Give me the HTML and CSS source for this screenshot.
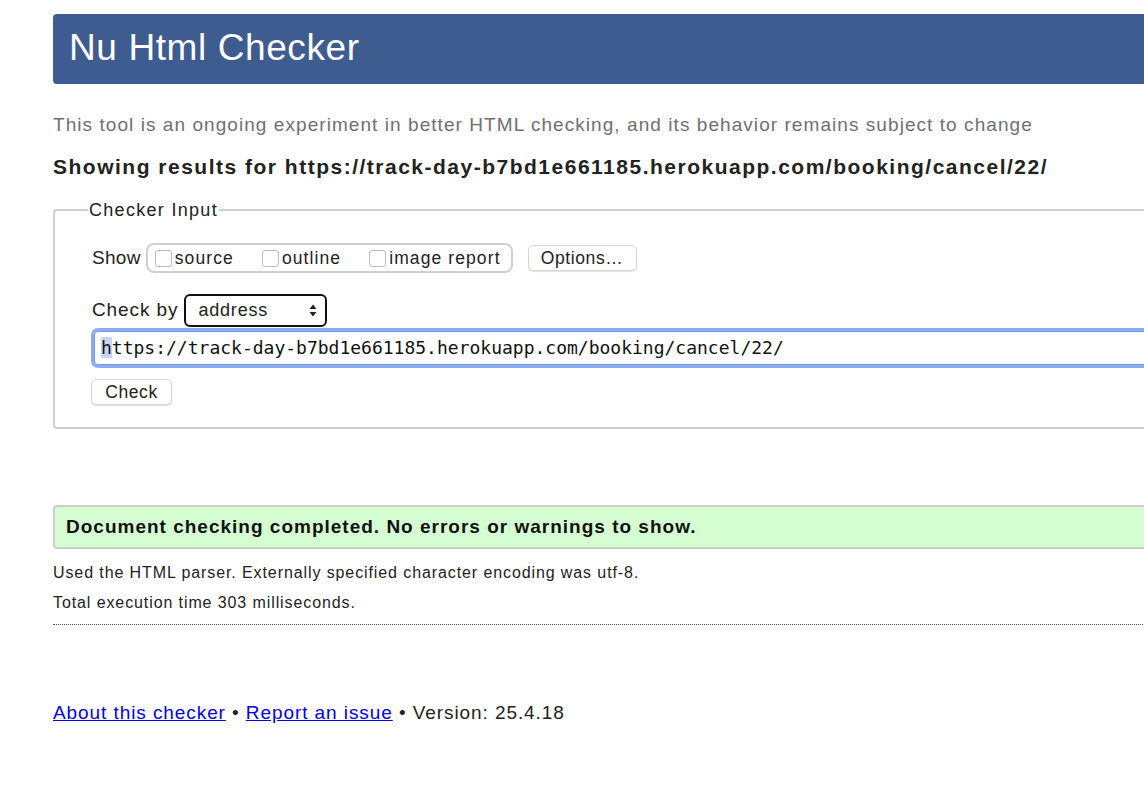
FILE: index.html
```html
<!DOCTYPE html>
<html lang="en">
<head>
<meta charset="utf-8">
<title>Nu Html Checker</title>
<link rel="stylesheet" href="styles.css">
</head>
<body>
<div class="page">
  <h1 class="banner">Nu Html Checker</h1>
  <p class="intro">This tool is an ongoing experiment in better HTML checking, and its behavior remains subject to change</p>
  <p class="showing">Showing results for https://track-day-b7bd1e661185.herokuapp.com/booking/cancel/22/</p>
  <fieldset class="input">
    <legend>Checker Input</legend>
    <div class="row show-row">
      <span class="label show-label">Show</span>
      <span class="group">
        <label class="opt"><span class="cb"></span>source</label>
        <label class="opt"><span class="cb"></span>outline</label>
        <label class="opt"><span class="cb"></span>image report</label>
      </span>
      <span class="btn options">Options…</span>
    </div>
    <div class="row by-row">
      <span class="label">Check by</span>
      <span class="select">address<svg class="arrows" width="8" height="13" viewBox="0 0 8 13"><path d="M4 0.5 L7.5 5 H0.5 Z M4 12.5 L7.5 8 H0.5 Z" fill="#222"/></svg></span>
    </div>
    <div class="url"><span class="caret">h</span>ttps://track-day-b7bd1e661185.herokuapp.com/booking/cancel/22/</div>
    <span class="btn check">Check</span>
  </fieldset>
  <div class="success">Document checking completed. No errors or warnings to show.</div>
  <p class="details">Used the HTML parser. Externally specified character encoding was utf-8.</p>
  <p class="details time">Total execution time 303 milliseconds.</p>
  <div class="dots"></div>
  <p class="footer"><a href="#">About this checker</a> • <a href="#">Report an issue</a> • Version: 25.4.18</p>
</div>
</body>
</html>
```
FILE: styles.css
```css
html { overflow: hidden; background: #fff; }
body { margin: 0; font-family: "Liberation Sans", Arial, sans-serif; color: #222; }
.page { width: 1200px; padding: 14px 0 0 53px; }
.banner {
  margin: 0;
  height: 70px;
  box-sizing: border-box;
  padding: 14px 0 0 16px;
  background: #3e5c8f;
  color: #fff;
  font-weight: normal;
  font-size: 37px;
  letter-spacing: 0.6px;
  line-height: 40px;
  border-radius: 4px 0 0 4px;
}
.intro { margin: 30px 0 0; font-size: 19px; letter-spacing: 1.06px; line-height: 22px; color: #707070; }
.showing { margin: 19px 0 0; font-size: 21px; letter-spacing: 1.5px; line-height: 24px; font-weight: bold; color: #222; }
.input {
  margin: 21px 0 0;
  padding: 23px 0 22px 37px;
  border: 2px solid #cfcfcf;
  border-right: none;
  border-radius: 4px 0 0 4px;
  min-width: 0;
}
.input legend { margin-left: -4px; padding: 0 1px; font-size: 18px; letter-spacing: 1.3px; line-height: 20px; color: #222; }
.row { display: flex; align-items: center; }
.label { font-size: 19px; letter-spacing: 0.9px; color: #222; }
.show-label { letter-spacing: 0.3px; }
.show-row { height: 30px; }
.group {
  display: flex; align-items: center;
  margin-left: 5px;
  height: 30px; box-sizing: border-box;
  padding: 0 10px 0 7px;
  border: 2px solid #d0d0d0; border-radius: 8px;
  gap: 28px;
  font-size: 17.5px; letter-spacing: 1.1px;
}
.opt { display: flex; align-items: center; gap: 3px; color: #222; }
.cb { width: 17px; height: 17px; box-sizing: border-box; border: 1px solid #bdbdbd; border-radius: 3px; background: #fff; }
.btn {
  display: inline-flex; align-items: center; justify-content: center;
  box-sizing: border-box;
  border: 1px solid #d6d6d6; border-radius: 5px;
  background: #fff;
  box-shadow: 0 1px 1px rgba(0,0,0,0.12);
  font-size: 17.5px; letter-spacing: 0.6px; color: #222;
}
.options { margin-left: 15px; width: 109px; height: 26px; }
.by-row { margin-top: 20px; height: 34px; }
.select {
  display: flex; align-items: center; justify-content: space-between;
  margin-left: 6px; width: 143px; height: 33px; box-sizing: border-box;
  padding: 0 8px 0 12px;
  border: 2px solid #111; border-radius: 6px;
  font-size: 18px; letter-spacing: 0.8px; color: #222;
}
.url {
  margin-top: 1px; margin-left: -1px;
  height: 40px; box-sizing: border-box;
  padding: 0 0 0 7px;
  border: 3px solid #8eaaf0; border-right: none;
  border-radius: 7px 0 0 7px;
  box-shadow: inset 0 0 0 1px #7a9be0;
  font-family: "DejaVu Sans Mono", monospace; font-size: 18px; line-height: 34px; color: #111;
}
.caret { background: #c8d6f4; }
.check { margin-top: 11px; margin-left: -1px; width: 81px; height: 26px; }
.success {
  margin-top: 76px;
  height: 44px; box-sizing: border-box;
  padding: 0 0 0 11px;
  border: 2px solid #cdcdcd; border-right: none;
  border-radius: 4px 0 0 4px;
  background: #d5fdd2;
  font-size: 19px; letter-spacing: 1px; font-weight: bold; line-height: 40px; color: #111;
}
.details { margin: 14px 0 0; font-size: 16px; letter-spacing: 0.9px; line-height: 20px; color: #222; }
.details.time { margin-top: 10px; }
.dots { margin-top: 11px; border-top: 1px dotted #555; }
.footer { margin: 77px 0 0; font-size: 19px; letter-spacing: 0.92px; line-height: 22px; color: #222; }
.footer a { color: #0000ee; }
```
